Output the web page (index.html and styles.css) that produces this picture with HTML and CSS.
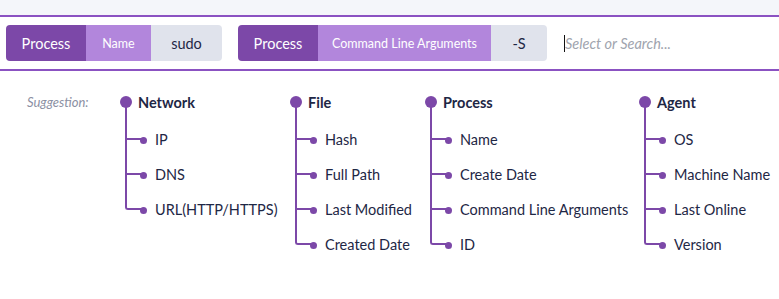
FILE: index.html
```html
<!DOCTYPE html>
<html lang="en">
<head>
    <meta charset="UTF-8">
    <meta name="viewport" content="width=device-width, initial-scale=1.0">
    <title>Query Builder</title>
    <link rel="stylesheet" href="styles.css">
</head>
<body>
    <div class="topstrip"></div>

    <div class="query-bar">
        <div class="chip">
            <span class="seg seg-type">Process</span>
            <span class="seg seg-field">Name</span>
            <span class="seg seg-value">sudo</span>
        </div>
        <div class="chip">
            <span class="seg seg-type">Process</span>
            <span class="seg seg-field">Command Line Arguments</span>
            <span class="seg seg-value seg-short">-S</span>
        </div>
        <div class="search">
            <span class="caret"></span>
            <span class="placeholder">Select or Search...</span>
        </div>
    </div>

    <div class="suggestions">
        <div class="suggest-label">Suggestion:</div>

        <div class="group group-network">
            <div class="group-title"><span class="dot"></span>Network</div>
            <ul class="items">
                <li>IP</li>
                <li>DNS</li>
                <li>URL(HTTP/HTTPS)</li>
            </ul>
        </div>

        <div class="group group-file">
            <div class="group-title"><span class="dot"></span>File</div>
            <ul class="items">
                <li>Hash</li>
                <li>Full Path</li>
                <li>Last Modified</li>
                <li>Created Date</li>
            </ul>
        </div>

        <div class="group group-process">
            <div class="group-title"><span class="dot"></span>Process</div>
            <ul class="items">
                <li>Name</li>
                <li>Create Date</li>
                <li>Command Line Arguments</li>
                <li>ID</li>
            </ul>
        </div>

        <div class="group group-agent">
            <div class="group-title"><span class="dot"></span>Agent</div>
            <ul class="items">
                <li>OS</li>
                <li>Machine Name</li>
                <li>Last Online</li>
                <li>Version</li>
            </ul>
        </div>
    </div>
</body>
</html>
```

FILE: styles.css
```css
body {
    font-family: Lato, "Open Sans", sans-serif;
    background-color: #ffffff;
    color: #1e2745;
    margin: 0;
}
.topstrip {
    height: 15px;
    background-color: #f4f6fa;
}
.query-bar {
    display: flex;
    align-items: center;
    gap: 16px;
    padding: 8px 6px;
    border-top: 2px solid #8b52c2;
    border-bottom: 2px solid #8b52c2;
}
.chip {
    display: flex;
    flex-shrink: 0;
    height: 36px;
    border-radius: 4px;
    overflow: hidden;
}
.seg {
    display: flex;
    align-items: center;
    justify-content: center;
    box-sizing: border-box;
    font-size: 14.5px;
    padding: 0 16px;
}
.seg-type {
    width: 80px;
    padding: 0;
    background-color: #7c48a8;
    color: #ffffff;
}
.seg-field {
    min-width: 65px;
    padding: 0 14px;
    font-size: 12.5px;
    background-color: #b286dc;
    color: #ffffff;
}
.seg-value {
    min-width: 71px;
    background-color: #e0e3ec;
    color: #1e2745;
}
.seg-short {
    min-width: 56px;
}
.search {
    display: flex;
    align-items: center;
    margin-left: 1px;
    height: 36px;
}
.caret {
    width: 1px;
    height: 17px;
    background-color: #111111;
}
.placeholder {
    font-size: 14.5px;
    font-style: italic;
    color: #a0a4ae;
}
.suggestions {
    display: flex;
    align-items: flex-start;
    padding: 21px 0 0 27px;
}
.suggest-label {
    flex-shrink: 0;
    width: 93px;
    line-height: 20px;
    font-size: 13px;
    font-style: italic;
    color: #8b90a3;
}
.group {
    flex-shrink: 0;
    width: 170px;
}
.group-file {
    width: 135px;
}
.group-process {
    width: 214px;
}
.group-title {
    display: flex;
    align-items: center;
    gap: 6px;
    height: 20px;
    font-size: 14.5px;
    font-weight: bold;
}
.dot {
    width: 12px;
    height: 12px;
    border-radius: 50%;
    background-color: #7c48a8;
}
.items {
    list-style: none;
    margin: 10px 0 0;
    padding: 0;
}
.items li {
    position: relative;
    height: 35px;
    line-height: 35px;
    padding-left: 35px;
    font-size: 14.5px;
}
.items li::before {
    content: "";
    position: absolute;
    left: 5px;
    top: -18px;
    width: 16px;
    height: 36px;
    box-sizing: border-box;
    border-left: 2px solid #7c48a8;
    border-bottom: 2px solid #7c48a8;
}
.items li:last-child::before {
    border-bottom-left-radius: 3px;
}
.items li::after {
    content: "";
    position: absolute;
    left: 20px;
    top: 50%;
    width: 7px;
    height: 7px;
    margin-top: -3px;
    border-radius: 50%;
    background-color: #7c48a8;
}
```
